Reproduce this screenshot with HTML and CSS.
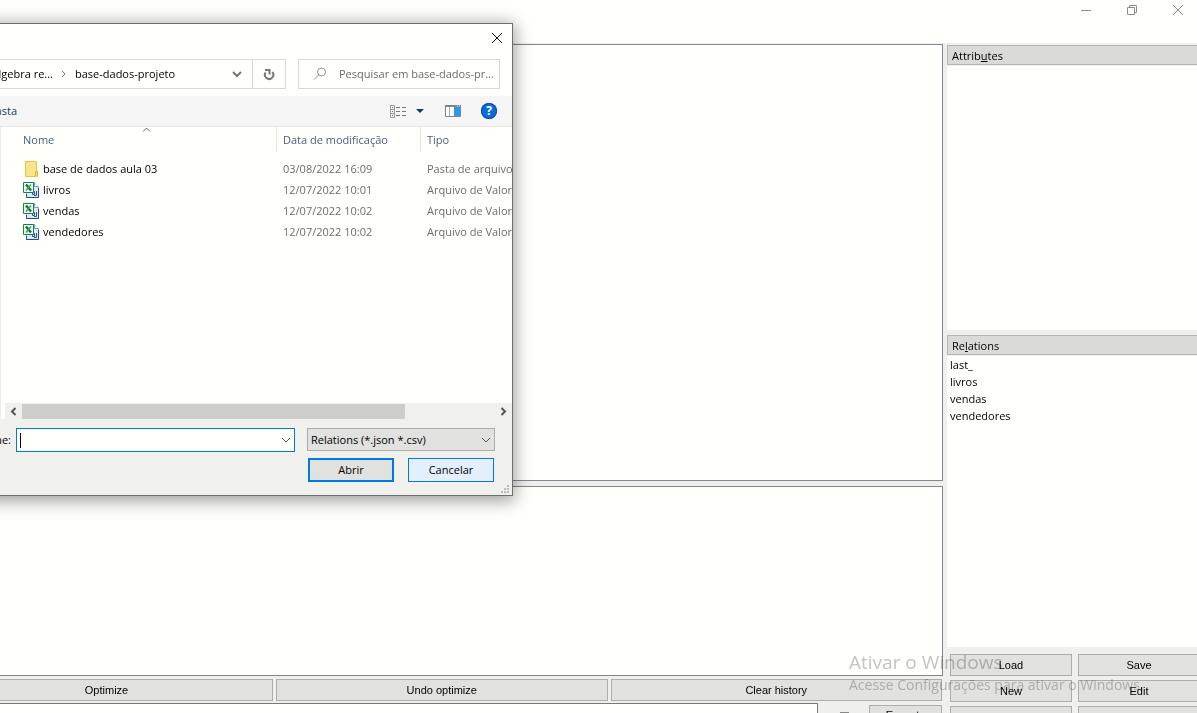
FILE: index.html
```
<!DOCTYPE html>
<html lang="pt-BR">
<head>
<meta charset="utf-8">
<title>Relational</title>
<link rel="stylesheet" href="styles.css">
</head>
<body>
<div class="app">
  <header class="titlebar">
    <button class="win-btn" aria-label="Minimizar"><svg width="12" height="12"><path d="M1 6.5h10"/></svg></button>
    <button class="win-btn" aria-label="Restaurar"><svg width="12" height="12"><path d="M1.5 3.500h7v7h-7zM3.500 3.500v-2h7v7h-2"/></svg></button>
    <button class="win-btn" aria-label="Fechar"><svg width="12" height="12"><path d="M1 1l10 10M11 1L1 11"/></svg></button>
  </header>
  <main class="workspace">
    <section class="editor">
      <div class="pane pane-main"></div>
      <div class="pane pane-history"></div>
      <div class="actions">
        <button class="btn">Optimize</button>
        <button class="btn">Undo optimize</button>
        <button class="btn">Clear history</button>
      </div>
      <div class="query">
        <input class="query-input" type="text" aria-label="Query">
        <button class="query-menu" aria-label="Menu"><svg width="9" height="10"><path d="M0 1.500h9M0 5.500h9"/></svg></button>
        <button class="btn">Execute</button>
      </div>
    </section>
    <aside class="side">
      <h2 class="side-title">Attrib<u>u</u>tes</h2>
      <ul class="list list-attributes"></ul>
      <h2 class="side-title">Re<u>l</u>ations</h2>
      <ul class="list list-relations"><li>last_</li><li>livros</li><li>vendas</li><li>vendedores</li></ul>
      <div class="side-actions">
        <button class="btn">Load</button>
        <button class="btn">Save</button>
        <button class="btn">New</button>
        <button class="btn">Edit</button>
        <button class="btn">Unload</button>
        <button class="btn">Unload all</button>
      </div>
    </aside>
  </main>
</div>

<div class="watermark">
  <p class="watermark-title">Ativar o Windows</p>
  <p class="watermark-text">Acesse Configurações para ativar o Windows.</p>
</div>

<div class="dialog" role="dialog" aria-label="Abrir">
  <div class="dialog-title">
    <button class="close" aria-label="Fechar"><svg width="12" height="12"><path d="M1 1l10 10M11 1L1 11"/></svg></button>
  </div>
  <div class="address-row">
    <div class="address">
      <span class="crumb-parent">álgebra re...</span>
      <svg class="crumb-sep" width="6" height="8"><path d="M1 1l3 3-3 3"/></svg>
      <span class="crumb">base-dados-projeto</span>
      <svg class="crumb-drop" width="10" height="8"><path d="M1 2l4 4 4-4"/></svg>
    </div>
    <button class="refresh" aria-label="Atualizar"><svg width="12" height="13"><path d="M2.600 4.500A4.200 4.200 0 1 0 9.300 4"/><path d="M2 2h4.500v4.500"/></svg></button>
    <label class="search">
      <svg width="14" height="14"><circle cx="8.500" cy="5" r="4"/><path d="M5.700 7.800L1 12.500"/></svg>
      <input type="text" placeholder="Pesquisar em base-dados-pr..." aria-label="Pesquisar">
    </label>
  </div>
  <div class="toolbar">
    <button class="new-folder">Nova pasta</button>
    <button class="tool tool-view" aria-label="Exibição">
      <svg width="16" height="13"><path d="M.5.5h4v12h-4zM.5 4.500h4M.5 8.500h4" fill="none" stroke="#999"/><path d="M2 2h1v1H2z" fill="#398a62"/><path d="M2 6h1v1H2z" fill="#2c83dc"/><path d="M2 10h1v1H2z" fill="#e4301e"/><path d="M6 2.500h10M6 6.500h10M6 10.500h10" fill="none" stroke="#777" stroke-dasharray="4 2"/></svg>
      <svg width="8" height="4"><path d="M0 0h8L4 4z" fill="#183760"/></svg>
    </button>
    <button class="tool tool-preview" aria-label="Painel de visualização"><svg width="16" height="12"><path d="M.5.5h15v11H.5z" fill="#fff" stroke="#848484"/><path d="M0 0h16v2H0z" fill="#848484"/><path d="M4.500 2v9" stroke="#aaa"/><path d="M9 2h6v9H9z" fill="#2998ed"/><path d="M12 1h1M14 1h1" stroke="#fff"/></svg></button>
    <button class="tool tool-help" aria-label="Ajuda">?</button>
  </div>
  <div class="files">
    <svg class="sort" width="9" height="5"><path d="M1 4.500l3.500-3.500L8 4.500"/></svg>
    <table>
      <colgroup><col class="col-name"><col class="col-date"><col></colgroup>
      <thead><tr><th>Nome</th><th>Data de modificação</th><th>Tipo</th></tr></thead>
      <tbody>
        <tr><td><span class="file"><svg width="17" height="16"><path d="M2.500.5h11v10h1v5h-12z" fill="#fae489" stroke="#e3c64b"/><path d="M12.500 15.500v-5h2v5" fill="#f6db70" stroke="#d9b93a"/></svg>base de dados aula 03</span></td><td>03/08/2022 16:09</td><td>Pasta de arquivos</td></tr>
        <tr><td><span class="file"><svg width="17" height="16"><use href="#csv"/></svg>livros</span></td><td>12/07/2022 10:01</td><td>Arquivo de Valores</td></tr>
        <tr><td><span class="file"><svg width="17" height="16"><use href="#csv"/></svg>vendas</span></td><td>12/07/2022 10:02</td><td>Arquivo de Valores</td></tr>
        <tr><td><span class="file"><svg width="17" height="16"><use href="#csv"/></svg>vendedores</span></td><td>12/07/2022 10:02</td><td>Arquivo de Valores</td></tr>
      </tbody>
    </table>
    <div class="scrollbar">
      <svg width="7" height="9"><path d="M5.500 1L2 4.500 5.500 8"/></svg>
      <div class="track"><div class="thumb"></div></div>
      <svg width="7" height="9"><path d="M1.500 1L5 4.500 1.500 8"/></svg>
    </div>
  </div>
  <div class="dialog-footer">
    <div class="name-row">
      <label class="name-label" for="filename">Nome:</label>
      <div class="combo">
        <span class="caret"></span>
        <input id="filename" type="text">
        <svg width="10" height="6"><path d="M1 1l4 4 4-4"/></svg>
      </div>
      <div class="filter">
        <select aria-label="Tipo de arquivo"><option>Relations (*.json *.csv)</option></select>
        <svg width="10" height="6"><path d="M1 1l4 4 4-4"/></svg>
      </div>
    </div>
    <div class="dialog-buttons">
      <button class="open">Abrir</button>
      <button class="cancel">Cancelar</button>
    </div>
    <svg class="grip" width="8" height="8"><path d="M6 0h2v2H6zM3 3h2v2H3zM6 3h2v2H6zM0 6h2v2H0zM3 6h2v2H3zM6 6h2v2H6z" fill="#bbbbb8"/></svg>
  </div>
</div>

<svg class="symbols" width="0" height="0"><defs>
  <g id="csv">
    <path d="M3.500.5h8l4 4v11h-12z" fill="#dfe9f8" stroke="#8fa9d2"/>
    <path d="M11.500.5v4h4" fill="#fff" stroke="#7d9ccc"/>
    <path d="M3.500 12v3.500h12V6" fill="none" stroke="#274a80"/>
    <path d="M9.500 9.500h2v3h-2zM13.500 9v4.500H11" fill="#c8d8f0" stroke="#34558f"/>
    <path d="M.5.5h10v10H.5z" fill="#f0faf2" stroke="#148443"/>
    <path d="M3 2.500L8 8.500" fill="none" stroke="#11703a" stroke-width="2.400"/>
    <path d="M8 2.500L3 8.500" fill="none" stroke="#3fa564" stroke-width="1.500"/>
  </g>
</defs></svg>
</body>
</html>
```
FILE: styles.css
```
* { box-sizing: border-box; }
body {
  margin: 0;
  height: 100vh;
  position: relative;
  overflow: hidden;
  background: #fffffc;
  color: #000;
  font: 11px/16px "Open Sans", "Noto Sans", sans-serif;
}
button, input, select { font: inherit; color: inherit; border: 0; padding: 0; margin: 0; background: none; border-radius: 0; outline: 0; }
button { cursor: pointer; }
svg { flex: none; display: block; fill: none; stroke: none; }
p, ul, h2 { margin: 0; padding: 0; }
ul { list-style: none; }

/* Main window, larger than the screen on the left, right and bottom */
.app { display: flex; flex-direction: column; height: calc(100vh + 20px); margin: 0 -6px 0 -60px; }
.titlebar { height: 43px; flex: none; display: flex; justify-content: flex-end; align-items: flex-start; padding: 4px 19px 0 0; gap: 34px; }
.win-btn { width: 12px; height: 12px; }
.win-btn svg { stroke: #8c8c8a; }
.workspace { flex: 1; min-height: 0; display: flex; gap: 4px; background: #efefec; }
.editor { flex: 1; display: flex; flex-direction: column; padding-top: 1px; }
.pane { background: #fffffc; border: 1px solid #828790; }
.pane-main { flex: 1; margin-bottom: 5px; }
.pane-history { height: 190px; margin-bottom: 3px; }
.actions { display: grid; grid-template-columns: 333px 1fr 1fr; gap: 3px; padding-right: 1px; }
.btn { height: 22px; background: #e1e1df; border: 1px solid #adadab; font-family: "Liberation Sans", Arial, sans-serif; line-height: 16px; }
.query { display: flex; gap: 22px; padding: 2px 1px 0 0; height: 32px; }
.query-input { flex: 1; height: 24px; background: #fffffc; border: 1px solid #7a7a78; }
.query-menu { width: 9px; height: 20px; padding-top: 8px; }
.query-menu svg { stroke: #222; stroke-width: 2; }
.query .btn { width: 73px; height: 20px; margin: 2px 0 0 -2px; }

.side { width: 256px; flex: none; display: flex; flex-direction: column; padding-top: 2px; }
.side-title { height: 20px; padding: 2px 4px 0; background: #dadad8; border: 1px solid #b6b6b4; font-size: 11px; font-weight: 400; line-height: 16px; }
.list { background: #fffffc; margin: 1px 0 5px; }
.list-attributes { height: 264px; }
.list-relations { flex: 1; padding: 0 3px; line-height: 17px; margin-bottom: 7px; }
.side-actions { display: grid; grid-template-columns: 1fr 1fr; gap: 4px 6px; padding: 0 3px 5px; }

.watermark { position: absolute; right: 50px; bottom: 18px; width: 298px; color: #c4c4c2; mix-blend-mode: multiply; pointer-events: none; white-space: nowrap; }
.watermark-title { font-size: 19px; line-height: 25px; }
.watermark-text { font-size: 14px; line-height: 20px; }

/* File dialog, partly beyond the left edge */
.dialog {
  position: absolute; left: -100px; top: 23px; width: 613px;
  display: flex; flex-direction: column;
  background: #fffffc; border: 1px solid #6e6e6c;
  box-shadow: 0 3px 16px 2px rgba(0, 0, 0, .38);
}
.dialog-title { height: 35px; display: flex; justify-content: flex-end; padding: 8px 9px 0 0; }
.close { width: 12px; height: 12px; }
.close svg { stroke: #111; }
.address-row { display: flex; height: 30px; padding-right: 12px; }
.address { width: 352px; display: flex; align-items: center; border: 1px solid #d9d9d7; }
.crumb-parent { width: 151px; text-align: right; }
.crumb-sep { margin: 0 8px; stroke: #777; }
.crumb-drop { margin: 0 10px 0 auto; stroke: #777; stroke-width: 2; }
.refresh { width: 33px; border: 1px solid #d9d9d7; border-left: 0; display: grid; place-items: center; }
.refresh svg { stroke: #777; stroke-width: 2; }
.search { flex: 1; min-width: 0; margin-left: 12px; border: 1px solid #d9d9d7; display: flex; align-items: center; gap: 12px; padding-left: 14px; }
.search svg { stroke: #929290; }
.search input { flex: 1; min-width: 0; }
.search input::placeholder { color: #6b6b6b; opacity: 1; }
.toolbar { height: 31px; margin-top: 7px; background: #f5f5f5; border-bottom: 1px solid #e6e6e4; display: flex; align-items: center; padding-right: 15px; }
.new-folder { width: 116px; text-align: right; color: #1e395b; }
.tool-view { display: flex; align-items: center; gap: 10px; margin-left: auto; }
.tool-preview { margin: 0 20px 0 21px; }
.tool-help { width: 16px; height: 16px; border-radius: 50%; background: #0a6ddc; box-shadow: 0 0 0 1px #0b4a94 inset; color: #fff; font-weight: 700; line-height: 16px; font-size: 12px; }

.files { position: relative; height: 292px; margin-left: 99px; border-left: 1px solid #ececea; overflow: hidden; display: flex; flex-direction: column; }
.sort { position: absolute; left: 141px; top: 0; stroke: #666; }
table { table-layout: fixed; width: 100%; border-collapse: separate; border-spacing: 0; }
.col-name { width: 276px; }
.col-date { width: 144px; }
th { height: 25px; padding: 0 6px; text-align: left; font-weight: 400; color: #4c607a; border-right: 1px solid #e5e5e3; white-space: nowrap; }
th:last-child { border-right: 0; }
th:first-child, td:first-child { padding-left: 22px; }
td { height: 21px; padding: 0 6px; color: #6d6d6d; white-space: nowrap; overflow: hidden; }
tbody::before { content: ""; display: block; height: 6px; }
.file { display: flex; align-items: center; gap: 3px; color: #000; }
.scrollbar { margin-top: auto; height: 16px; margin-left: 4px; background: #f0f0ed; display: flex; align-items: center; gap: 5px; padding: 0 5px; }
.scrollbar svg { stroke: #555; stroke-width: 2; }
.track { flex: 1; }
.thumb { width: 81%; height: 15px; background: #cdcdca; }

.dialog-footer { position: relative; background: #f0f0ed; padding: 9px 17px 13px 0; }
.name-row { display: flex; }
.name-label { width: 110px; text-align: right; line-height: 24px; margin-right: 5px; }
.combo { width: 279px; height: 24px; background: #fffffc; border: 1px solid #0078e7; display: flex; align-items: center; padding: 0 3px; }
.caret { width: 1px; height: 15px; background: #000; }
.combo input { flex: 1; min-width: 0; }
.combo svg, .filter svg { stroke: #555; }
.filter { flex: 1; margin-left: 12px; position: relative; height: 23px; }
.filter select { appearance: none; width: 100%; height: 23px; padding: 0 3px; background: #e1e1df; border: 1px solid #adadab; }
.filter svg { position: absolute; right: 4px; top: 9px; pointer-events: none; }
.dialog-buttons { display: flex; justify-content: flex-end; gap: 14px; padding: 6px 1px 0 0; }
.dialog-buttons button { width: 86px; height: 24px; background: #e1e1df; border: 2px solid #0078e7; }
.dialog-buttons .cancel { background: #e3f0fc; border-width: 1px; }
.grip { position: absolute; right: 3px; bottom: 2px; }
.symbols { position: absolute; }
```
